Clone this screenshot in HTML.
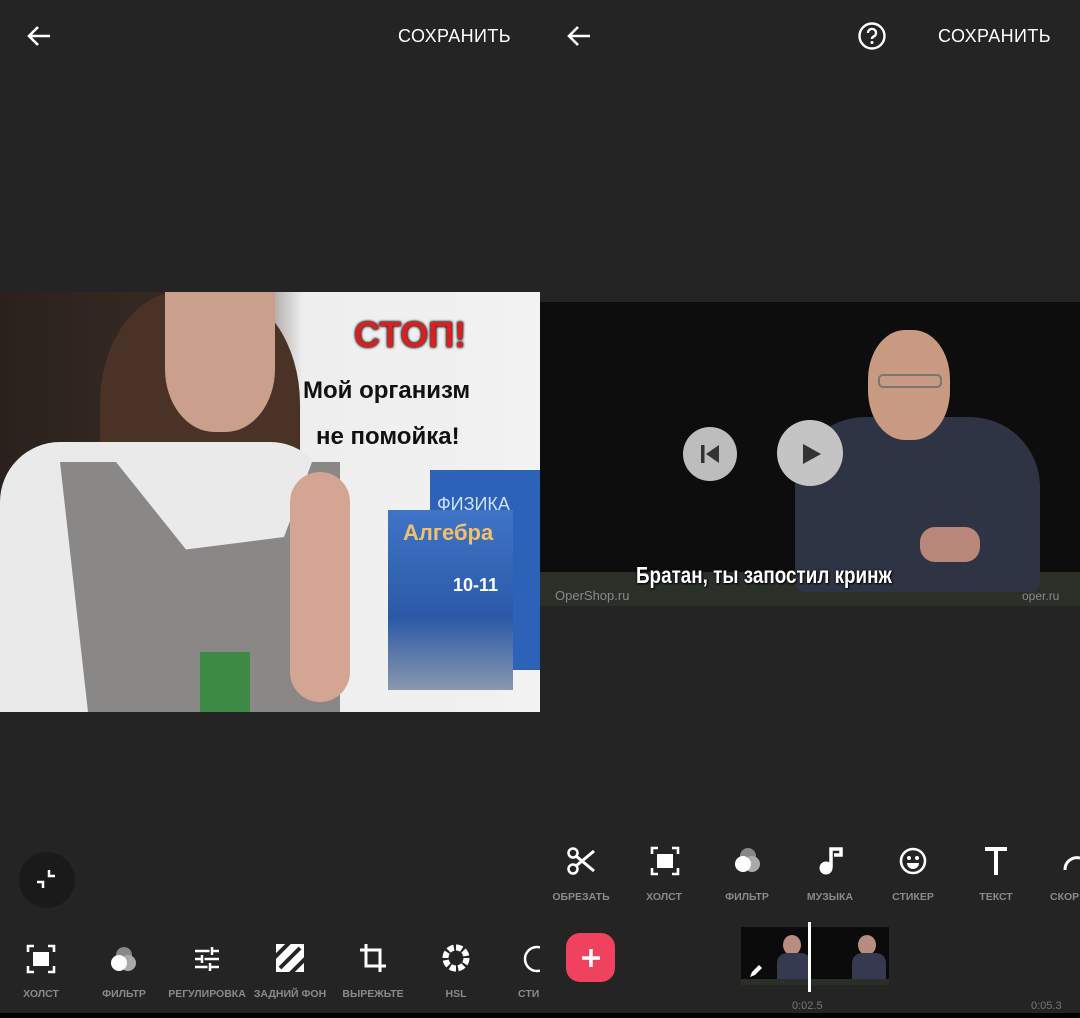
<!DOCTYPE html>
<html><head><meta charset="utf-8"><style>
*{margin:0;padding:0;box-sizing:border-box}
body{width:1080px;height:1018px;background:#242424;position:relative;overflow:hidden;font-family:"Liberation Sans",sans-serif;color:#fff}
.a{position:absolute}
.top{font-size:18px;font-weight:500;letter-spacing:.4px}
.lbl{position:absolute;font-size:10.5px;color:#8a8a8a;font-weight:bold;text-align:center;width:90px}
</style></head><body>
<svg class="a" style="left:26px;top:24px" width="26" height="24" viewBox="0 0 26 24"><path d="M24 12H4M12 3L3 12l9 9" stroke="#fff" stroke-width="2.6" fill="none"/></svg>
<div class="a top" style="left:398px;top:26px">СОХРАНИТЬ</div>
<svg class="a" style="left:566px;top:24px" width="26" height="24" viewBox="0 0 26 24"><path d="M24 12H4M12 3L3 12l9 9" stroke="#fff" stroke-width="2.6" fill="none"/></svg>
<svg class="a" style="left:857px;top:21px" width="30" height="30" viewBox="0 0 30 30"><circle cx="15" cy="15" r="12.5" stroke="#fff" stroke-width="2.4" fill="none"/><path d="M11 12a4 4 0 1 1 5.5 3.6c-1 .5-1.5 1-1.5 2.4" stroke="#fff" stroke-width="2.4" fill="none"/><circle cx="15" cy="21.5" r="1.5" fill="#fff"/></svg>
<div class="a top" style="left:938px;top:26px">СОХРАНИТЬ</div>

<div class="a" style="left:0;top:292px;width:540px;height:420px;background:linear-gradient(90deg,#2a211d 0,#3a2c24 40%,#eeeeee 56%,#f2f2f2 100%);overflow:hidden">
 <div class="a" style="left:100px;top:0;width:200px;height:280px;background:#4a3326;border-radius:40% 40% 10% 10%"></div>
 <div class="a" style="left:165px;top:0;width:110px;height:140px;background:#caa08c;border-radius:0 0 45% 45%"></div>
 <div class="a" style="left:0;top:150px;width:330px;height:270px;background:#eaeaea;border-radius:60px 60px 0 0"></div>
 <div class="a" style="left:60px;top:170px;width:280px;height:250px;background:#8a8787;clip-path:polygon(0 0,20% 0,45% 35%,80% 30%,90% 0,100% 0,100% 100%,10% 100%)"></div>
 <div class="a" style="left:290px;top:180px;width:60px;height:230px;background:#d4a592;border-radius:30px"></div>
 <div class="a" style="left:200px;top:360px;width:50px;height:60px;background:#3d8a44"></div>
 <div class="a" style="left:430px;top:178px;width:110px;height:200px;background:#2c63b8"></div>
 <div class="a" style="left:388px;top:218px;width:125px;height:180px;background:linear-gradient(#3f74c6,#2b59a8 60%,#8a98ac)"></div>
 <div class="a" style="left:403px;top:228px;font-size:22px;font-weight:bold;color:#f3c06a">Алгебра</div>
 <div class="a" style="left:453px;top:283px;font-size:18px;font-weight:bold;color:#fff">10-11</div>
 <div class="a" style="left:437px;top:202px;font-size:18px;color:#cfe0ff">ФИЗИКА</div>
 <div class="a" style="left:354px;top:22px;font-size:36px;font-weight:900;color:#d91f1f;text-shadow:0 0 3px #000,0 0 2px #000">СТОП!</div>
 <div class="a" style="left:303px;top:85px;font-size:24px;font-weight:bold;color:#111">Мой организм</div>
 <div class="a" style="left:316px;top:131px;font-size:24px;font-weight:bold;color:#111">не помойка!</div>
</div>

<div class="a" style="left:540px;top:302px;width:540px;height:304px;background:#0d0d0d;overflow:hidden">
 <div class="a" style="left:0;top:270px;width:540px;height:34px;background:#2a2f28"></div>
 <div class="a" style="left:255px;top:115px;width:245px;height:175px;background:#2f3444;border-radius:70px 70px 10px 10px"></div>
 <div class="a" style="left:328px;top:28px;width:82px;height:110px;background:#c89a82;border-radius:45%"></div>
 <div class="a" style="left:338px;top:72px;width:64px;height:14px;border:2px solid #777;border-radius:5px"></div>
 <div class="a" style="left:380px;top:225px;width:60px;height:35px;background:#b8877a;border-radius:15px"></div>
 <div class="a" style="left:143px;top:125px;width:54px;height:54px;border-radius:50%;background:#bdbdbd"></div>
 <svg class="a" style="left:158px;top:140px" width="24" height="24" viewBox="0 0 24 24"><rect x="3" y="3" width="3.5" height="18" fill="#333"/><path d="M21 3v18L8 12z" fill="#333"/></svg>
 <div class="a" style="left:237px;top:118px;width:66px;height:66px;border-radius:50%;background:#c4c4c4"></div>
 <svg class="a" style="left:258px;top:139px" width="26" height="26" viewBox="0 0 26 26"><path d="M5 3v20l18-10z" fill="#333"/></svg>
 <div class="a" style="left:96px;top:260px;font-size:23px;font-weight:bold;transform:scaleX(.82);transform-origin:left;white-space:nowrap;text-shadow:0 0 3px #000,1px 1px 2px #000">Братан, ты запостил кринж</div>
 <div class="a" style="left:15px;top:286px;font-size:13px;color:#8a8a8a">OperShop.ru</div>
 <div class="a" style="left:482px;top:287px;font-size:12px;color:#8a8a8a">oper.ru</div>
</div>

<div class="a" style="left:19px;top:852px;width:56px;height:56px;border-radius:50%;background:#1a1a1a"></div>
<svg class="a" style="left:35px;top:868px" width="24" height="24" viewBox="0 0 24 24"><path d="M14 2v6h6M2 14h6v6" stroke="#fff" stroke-width="2.5" fill="none"/></svg>

<svg class="a" style="left:26px;top:944px" width="30" height="30" viewBox="0 0 30 30"><path d="M2 8V2h6M22 2h6v6M28 22v6h-6M8 28H2v-6" stroke="#fff" stroke-width="2.6" fill="none"/><rect x="7" y="8" width="16" height="14" fill="#fff"/></svg>
<svg class="a" style="left:108px;top:944px" width="32" height="32"><circle cx="16" cy="11" r="8" fill="#888"/><circle cx="20" cy="19" r="8" fill="#aaa"/><circle cx="11" cy="19" r="8" fill="#fff"/></svg>
<svg class="a" style="left:192px;top:944px" width="30" height="30"><path d="M3 7h24M3 15h24M3 23h24" stroke="#fff" stroke-width="2.5"/><path d="M19 3v8M11 11v8M17 19v8" stroke="#242424" stroke-width="3"/><path d="M20 3v8M10 11v8M18 19v8" stroke="#fff" stroke-width="2.5"/></svg>
<svg class="a" style="left:276px;top:944px" width="28" height="28"><rect width="28" height="28" fill="#fff"/><path d="M-4 16L16 -4M4 24L24 4M12 32L32 12" stroke="#242424" stroke-width="4"/></svg>
<svg class="a" style="left:358px;top:942px" width="30" height="32"><path d="M8 2v22h20M2 8h20v22" stroke="#fff" stroke-width="3" fill="none"/></svg>
<svg class="a" style="left:441px;top:943px" width="30" height="30"><circle cx="15" cy="15" r="10.5" stroke="#fff" stroke-width="6" fill="none" stroke-dasharray="6 2.2"/></svg>
<svg class="a" style="left:522px;top:944px" width="18" height="30"><circle cx="15" cy="15" r="12" stroke="#fff" stroke-width="2.5" fill="none"/></svg>
<div class="lbl" style="left:-4px;top:988px">ХОЛСТ</div>
<div class="lbl" style="left:79px;top:988px">ФИЛЬТР</div>
<div class="lbl" style="left:162px;top:988px">РЕГУЛИРОВКА</div>
<div class="lbl" style="left:245px;top:988px">ЗАДНИЙ ФОН</div>
<div class="lbl" style="left:328px;top:988px">ВЫРЕЖЬТЕ</div>
<div class="lbl" style="left:411px;top:988px">HSL</div>
<div class="a" style="left:518px;top:988px;font-size:10.5px;color:#8a8a8a;font-weight:bold">СТИ</div>

<svg class="a" style="left:566px;top:846px" width="30" height="30" viewBox="0 0 30 30"><circle cx="7" cy="7" r="4.5" stroke="#fff" stroke-width="2.5" fill="none"/><circle cx="7" cy="23" r="4.5" stroke="#fff" stroke-width="2.5" fill="none"/><path d="M10 10l18 15M10 20L28 5" stroke="#fff" stroke-width="3"/></svg>
<svg class="a" style="left:650px;top:846px" width="30" height="30"><path d="M2 8V2h6M22 2h6v6M28 22v6h-6M8 28H2v-6" stroke="#fff" stroke-width="2.6" fill="none"/><rect x="7" y="8" width="16" height="14" fill="#fff"/></svg>
<svg class="a" style="left:732px;top:845px" width="32" height="32"><circle cx="16" cy="11" r="8" fill="#888"/><circle cx="20" cy="19" r="8" fill="#aaa"/><circle cx="11" cy="19" r="8" fill="#fff"/></svg>
<svg class="a" style="left:816px;top:846px" width="28" height="30"><circle cx="10" cy="22" r="6.5" fill="#fff"/><path d="M15 22V3h10v6h-7" stroke="#fff" stroke-width="3.5" fill="none"/></svg>
<svg class="a" style="left:898px;top:846px" width="30" height="30"><circle cx="15" cy="15" r="12" stroke="#fff" stroke-width="2.6" fill="none"/><circle cx="11" cy="12" r="2" fill="#fff"/><circle cx="19" cy="12" r="2" fill="#fff"/><path d="M9 17h12a6 6 0 0 1-12 0z" fill="#fff"/></svg>
<svg class="a" style="left:983px;top:846px" width="26" height="30"><path d="M2 3h22M13 3v26" stroke="#fff" stroke-width="4"/></svg>
<svg class="a" style="left:1062px;top:846px" width="18" height="30"><path d="M3 24a12 12 0 0 1 15-12" stroke="#fff" stroke-width="3" fill="none"/></svg>
<div class="lbl" style="left:536px;top:891px">ОБРЕЗАТЬ</div>
<div class="lbl" style="left:619px;top:891px">ХОЛСТ</div>
<div class="lbl" style="left:702px;top:891px">ФИЛЬТР</div>
<div class="lbl" style="left:785px;top:891px">МУЗЫКА</div>
<div class="lbl" style="left:868px;top:891px">СТИКЕР</div>
<div class="lbl" style="left:951px;top:891px">ТЕКСТ</div>
<div class="a" style="left:1050px;top:891px;font-size:10.5px;color:#8a8a8a;font-weight:bold">СКОР</div>

<div class="a" style="left:566px;top:933px;width:49px;height:49px;border-radius:14px;background:#f0415e"></div>
<svg class="a" style="left:580px;top:947px" width="22" height="22"><path d="M11 2v18M2 11h18" stroke="#fff" stroke-width="3.5"/></svg>
<div class="a" style="left:741px;top:927px;width:148px;height:58px;background:#0b0b0b;overflow:hidden">
 <div class="a" style="left:42px;top:8px;width:18px;height:20px;border-radius:50%;background:#b68d7e"></div>
 <div class="a" style="left:36px;top:26px;width:34px;height:30px;border-radius:10px 10px 0 0;background:#353a50"></div>
 <div class="a" style="left:117px;top:8px;width:18px;height:20px;border-radius:50%;background:#b68d7e"></div>
 <div class="a" style="left:111px;top:26px;width:34px;height:30px;border-radius:10px 10px 0 0;background:#353a50"></div>
 <div class="a" style="left:0;top:52px;width:148px;height:6px;background:#2a2f28"></div>
 <svg class="a" style="left:7px;top:38px" width="14" height="14"><path d="M2 12l2-5 7-7 3 3-7 7z" fill="#fff"/></svg>
</div>
<div class="a" style="left:808px;top:922px;width:3px;height:70px;background:#fff"></div>
<div class="a" style="left:792px;top:1000px;font-size:11px;color:#777">0:02.5</div>
<div class="a" style="left:1031px;top:1000px;font-size:11px;color:#777">0:05.3</div>
<div class="a" style="left:0;top:1013px;width:1080px;height:5px;background:#000"></div>
</body></html>
